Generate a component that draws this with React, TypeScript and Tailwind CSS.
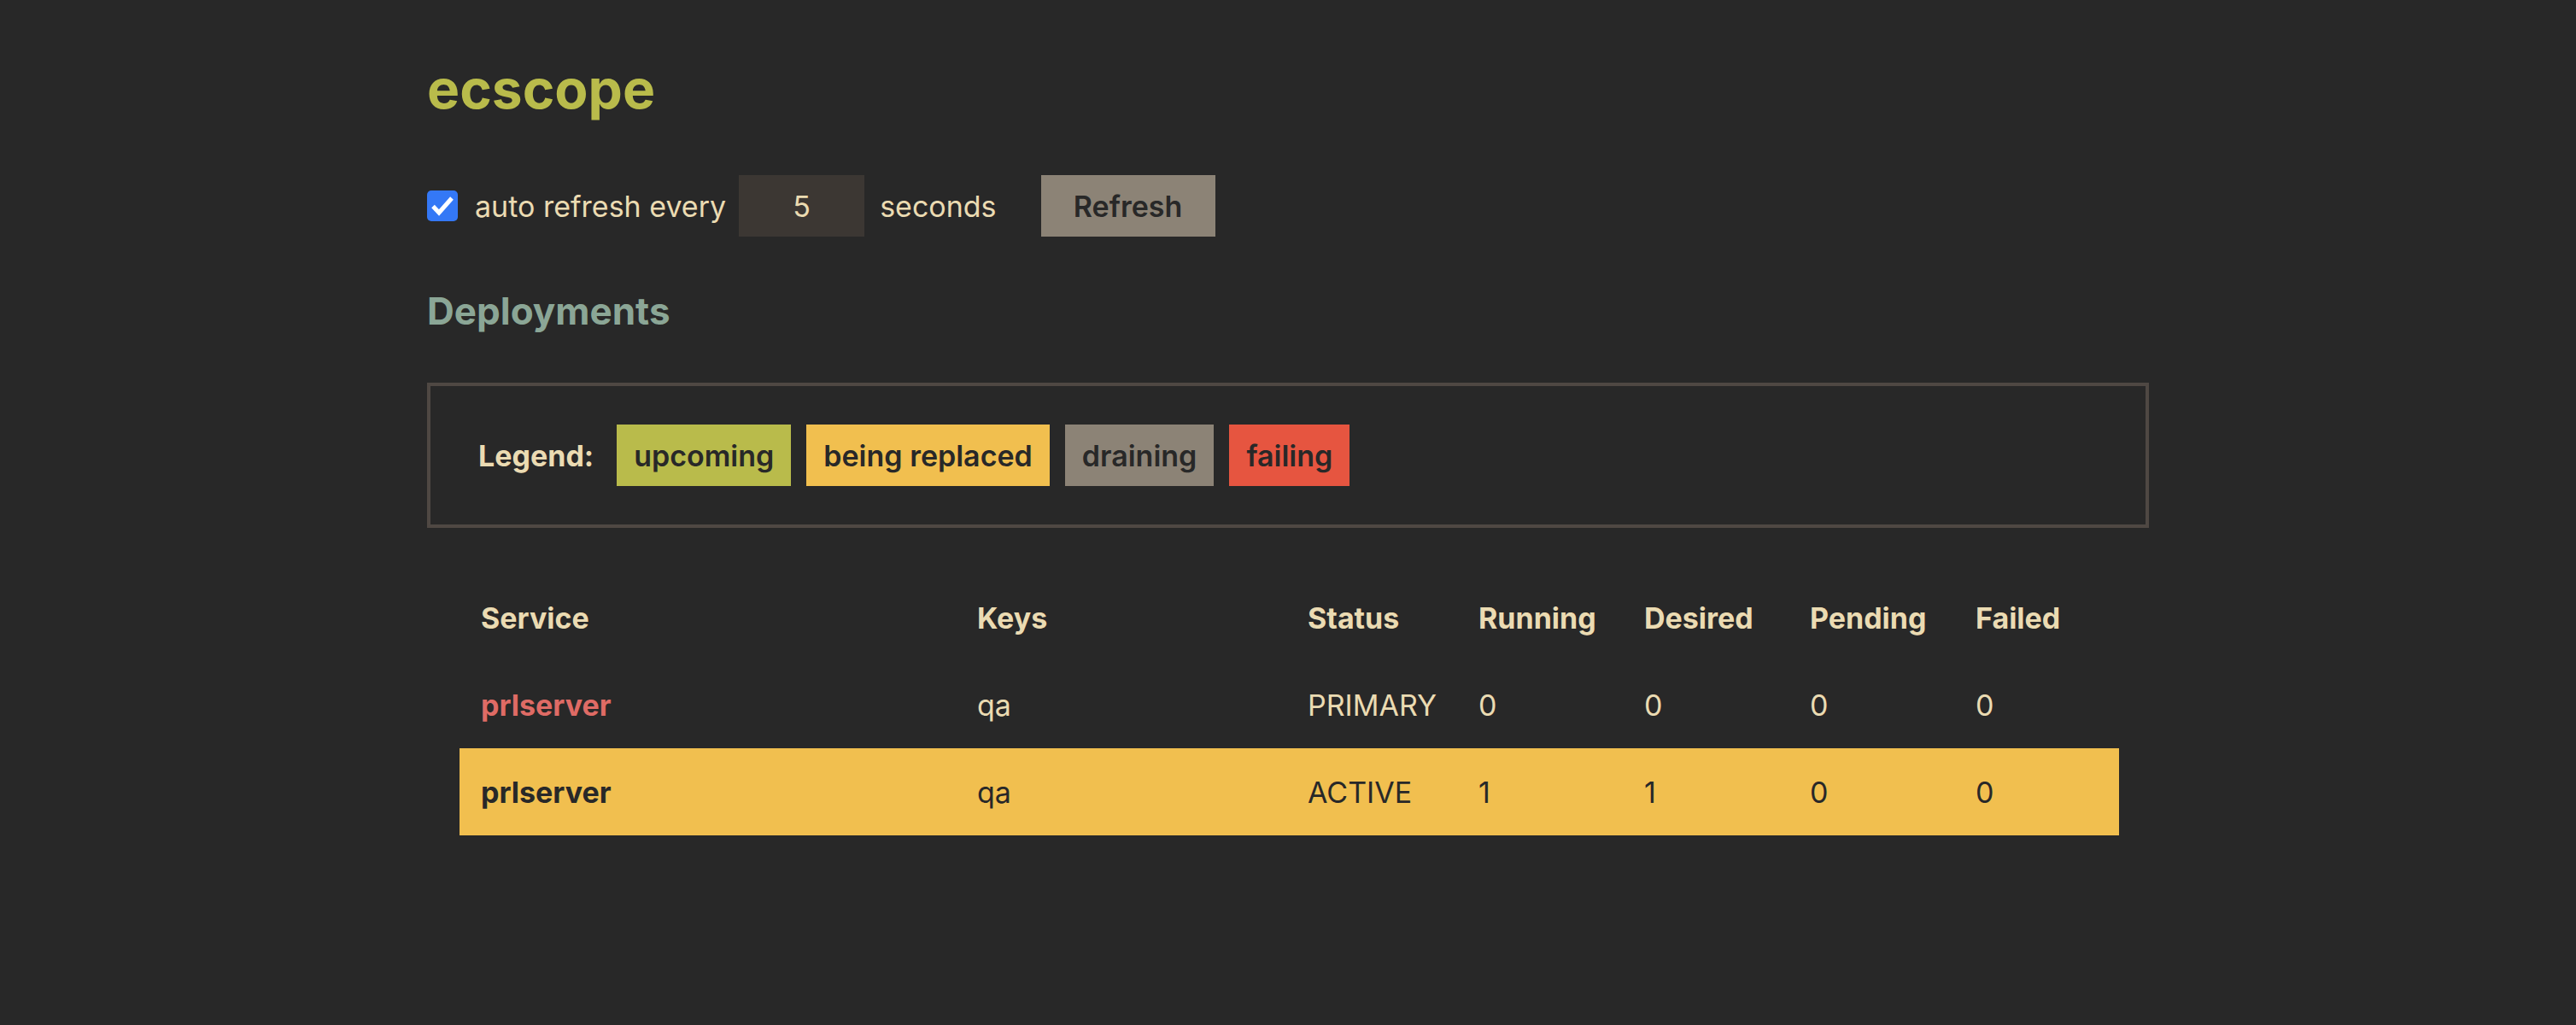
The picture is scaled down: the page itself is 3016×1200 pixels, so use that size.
import { useState } from "react";

type Row = {
  service: string;
  keys: string;
  status: string;
  running: number;
  desired: number;
  pending: number;
  failed: number;
  state: "primary" | "replaced";
};

const rows: Row[] = [
  { service: "prlserver", keys: "qa", status: "PRIMARY", running: 0, desired: 0, pending: 0, failed: 0, state: "primary" },
  { service: "prlserver", keys: "qa", status: "ACTIVE", running: 1, desired: 1, pending: 0, failed: 0, state: "replaced" },
];

const legend = [
  { label: "upcoming", cls: "bg-[#b9bb4b]" },
  { label: "being replaced", cls: "bg-[#f1bf4f]" },
  { label: "draining", cls: "bg-[#8c8376]" },
  { label: "failing", cls: "bg-[#e65540]" },
];

const headers = ["Service", "Keys", "Status", "Running", "Desired", "Pending", "Failed"];
const colWidths = ["w-[581px]", "w-[387px]", "w-[200px]", "w-[194px]", "w-[194px]", "w-[194px]", "w-[193px]"];

function Checkbox({ checked, onChange }: { checked: boolean; onChange: () => void }) {
  return (
    <button
      onClick={onChange}
      aria-checked={checked}
      role="checkbox"
      className={`w-[36px] h-[36px] rounded-[5px] flex items-center justify-center ${
        checked ? "bg-[#3478f6]" : "bg-[#ebdbb2]"
      }`}
    >
      {checked && (
        <svg viewBox="0 0 36 36" className="w-[36px] h-[36px]">
          <path d="M7 18.5 L14 26 L29 9" fill="none" stroke="#ffffff" strokeWidth="5" strokeLinejoin="miter" />
        </svg>
      )}
    </button>
  );
}

export default function App() {
  const [auto, setAuto] = useState(true);
  const [interval, setIntervalValue] = useState("5");

  return (
    <div className="min-h-screen bg-[#282828] font-['Inter',sans-serif] text-[#ebdbb2]">
      <div className="mx-auto w-[2016px] pt-[72px]">
        <h1 className="text-[64px] leading-none font-bold text-[#b9bb4b]">ecscope</h1>

        {/* Controls */}
        <div className="mt-[69px] h-[72px] flex items-center text-[34px]">
          <Checkbox checked={auto} onChange={() => setAuto(!auto)} />
          <span className="ml-[20px]">auto refresh every</span>
          <input
            type="text"
            value={interval}
            onChange={(e) => setIntervalValue(e.target.value)}
            className="ml-[15px] w-[147px] h-[72px] bg-[#3c3733] text-center text-[#ebdbb2] outline-none"
          />
          <span className="ml-[18px]">seconds</span>
          <button className="ml-[52px] h-[72px] w-[204px] bg-[#8c8376] text-[#282828] font-semibold">
            Refresh
          </button>
        </div>

        <h2 className="mt-[65px] text-[44px] leading-none font-bold text-[#8ba696]">Deployments</h2>

        {/* Legend */}
        <div className="mt-[62px] border-4 border-[#4f4843] pl-[56px] py-[45px] flex items-center gap-[18px] text-[34px]">
          <span className="font-bold mr-[9px]">Legend:</span>
          {legend.map((l) => (
            <span key={l.label} className={`${l.cls} h-[72px] px-[20px] flex items-center font-semibold text-[#282828]`}>
              {l.label}
            </span>
          ))}
        </div>

        {/* Table */}
        <table className="mt-[54px] ml-[38px] w-[1943px] table-fixed border-collapse text-[34px]">
          <colgroup>
            {colWidths.map((w, i) => (
              <col key={i} className={w} />
            ))}
          </colgroup>
          <thead>
            <tr className="h-[102px]">
              {headers.map((h) => (
                <th key={h} className="px-[25px] text-left font-bold">
                  {h}
                </th>
              ))}
            </tr>
          </thead>
          <tbody>
            {rows.map((r, i) => {
              const hl = r.state === "replaced";
              return (
                <tr key={i} className={`h-[102px] ${hl ? "bg-[#f1bf4f] text-[#282828]" : ""}`}>
                  <td className={`px-[25px] font-bold ${hl ? "" : "text-[#df6b65]"}`}>{r.service}</td>
                  <td className="px-[25px]">{r.keys}</td>
                  <td className="px-[25px]">{r.status}</td>
                  <td className="px-[25px]">{r.running}</td>
                  <td className="px-[25px]">{r.desired}</td>
                  <td className="px-[25px]">{r.pending}</td>
                  <td className="px-[25px]">{r.failed}</td>
                </tr>
              );
            })}
          </tbody>
        </table>
      </div>
    </div>
  );
}
